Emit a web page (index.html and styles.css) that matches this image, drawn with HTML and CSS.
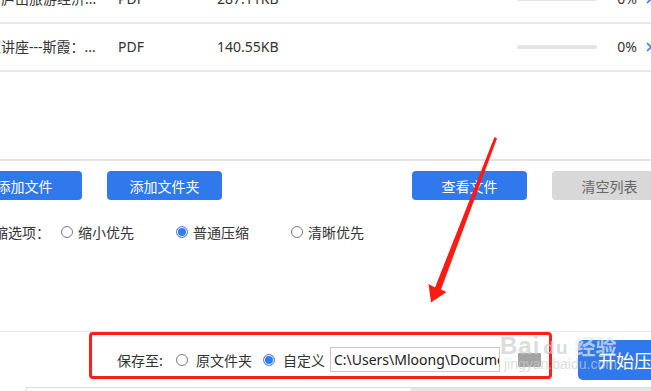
FILE: index.html
```html
<!DOCTYPE html>
<html lang="zh-CN">
<head>
    <meta charset="UTF-8">
    <meta name="viewport" content="width=device-width, initial-scale=1.0">
    <title>PDF压缩</title>
    <link rel="stylesheet" href="styles.css">
</head>
<body>

<div class="app">
    <div class="list">
        <div class="row">
            <div class="c-name">江西庐山旅游经济...</div>
            <div class="c-type">PDF</div>
            <div class="c-size">287.11KB</div>
            <div class="c-bar"><span></span></div>
            <div class="c-pct">0%</div>
            <svg class="chev" width="6" height="10" viewBox="0 0 6 10"><polyline points="1,1 5,5 1,9" fill="none" stroke="#3a7de8" stroke-width="1.6"/></svg>
        </div>
        <div class="row">
            <div class="c-name">名家讲座---斯霞：...</div>
            <div class="c-type">PDF</div>
            <div class="c-size">140.55KB</div>
            <div class="c-bar"><span></span></div>
            <div class="c-pct">0%</div>
            <svg class="chev" width="6" height="10" viewBox="0 0 6 10"><polyline points="1,1 5,5 1,9" fill="none" stroke="#3a7de8" stroke-width="1.6"/></svg>
        </div>
    </div>

    <div class="mid">
        <div class="toolbar">
            <button class="btn">添加文件</button>
            <button class="btn">添加文件夹</button>
            <button class="btn btn-view">查看文件</button>
            <button class="btn btn-gray">清空列表</button>
        </div>
        <div class="opts">
            <span class="opts-label">压缩选项：</span>
            <label class="opt"><span class="radio"></span>缩小优先</label>
            <label class="opt"><span class="radio on"></span>普通压缩</label>
            <label class="opt"><span class="radio"></span>清晰优先</label>
        </div>
    </div>

    <div class="savebar">
        <span class="save-label">保存至:</span>
        <label class="sopt sopt-first"><span class="radio"></span>原文件夹</label>
        <label class="sopt"><span class="radio on"></span>自定义</label>
        <div class="path">C:\Users\Mloong\Documents\PDF</div>
        <span class="folder"></span>
        <button class="btn btn-start">开始压缩</button>
    </div>

    <div class="foot"><span class="foot-right"></span></div>
</div>

<!-- annotation overlay -->
<div class="mark-box"></div>
<svg class="arrow" width="651" height="391" viewBox="0 0 651 391">
    <polygon points="494.5,137 497,138.5 441,289.5 446.5,292 431,302.5 428.5,284 435,287.5" fill="#ff1a14"/>
</svg>

<div class="watermark">
    <span class="wm-bai">Bai<span class="wm-du">du</span></span><span class="wm-jy">经验</span>
    <span class="wm-url">jingyan.baidu.com</span>
</div>

</body>
</html>
```

FILE: styles.css
```css
body {
    margin: 0;
    width: 651px;
    height: 391px;
    overflow: hidden;
    position: relative;
    background: #fff;
    color: #333;
    font-family: "Noto Sans", "Noto Sans CJK SC", sans-serif;
    font-size: 14px;
}
.app {
    width: 740px;
    margin-left: -34px;
}
.list {
    margin-top: -24px;
    height: 183px;
    border-bottom: 2px solid #e3e3e3;
}
.row {
    display: flex;
    align-items: center;
    height: 46px;
    border-bottom: 2px solid #e9e9e9;
    padding-left: 7px;
    line-height: 20px;
    white-space: nowrap;
}
.c-name {
    width: 145px;
    overflow: hidden;
}
.c-type {
    width: 99px;
}
.c-size {
    width: 300px;
}
.c-bar {
    width: 80px;
    height: 4px;
    border-radius: 2px;
    background: #e4e4e4;
}
.c-pct {
    width: 40px;
    text-align: right;
}
.chev {
    margin-left: 9px;
}
.mid {
    height: 170px;
    border-bottom: 1px solid #e6e6e6;
}
.toolbar {
    display: flex;
    padding-top: 10px;
    padding-left: 1px;
    gap: 25px;
}
.btn {
    width: 115px;
    height: 29px;
    border: none;
    border-radius: 4px;
    background: #3079ed;
    color: #fff;
    font-family: "Noto Sans CJK SC", sans-serif;
    font-size: 14px;
    padding: 0;
}
.btn-view {
    margin-left: 165px;
}
.btn-gray {
    background: #d8d8d8;
    color: #666;
}
.opts {
    display: flex;
    align-items: center;
    height: 20px;
    margin-top: 22px;
    padding-left: 14px;
    font-family: "Noto Sans CJK SC", sans-serif;
}
.opts-label {
    width: 81px;
}
.opt {
    display: flex;
    align-items: center;
    width: 115px;
}
.radio {
    width: 12px;
    height: 12px;
    box-sizing: border-box;
    border: 1px solid #7a7a7a;
    border-radius: 50%;
    background: #fff;
    margin-right: 5px;
    flex: none;
}
.radio.on {
    border-color: #6d8ec4;
    background: #2f7cf6;
    box-shadow: inset 0 0 0 1px #fff;
}
.savebar {
    display: flex;
    align-items: center;
    height: 55px;
    padding-left: 151px;
    font-family: "Noto Sans CJK SC", sans-serif;
}
.save-label {
    margin-right: 13px;
}
.sopt {
    display: flex;
    align-items: center;
    margin-right: 11px;
}
.sopt .radio {
    margin-right: 8px;
}
.sopt-first + .sopt {
    margin-right: 5px;
}
.path {
    width: 170px;
    height: 25px;
    box-sizing: border-box;
    border: 1px solid #c8c8c8;
    padding-left: 3px;
    line-height: 23px;
    white-space: nowrap;
    overflow: hidden;
    font-family: "Noto Sans", sans-serif;
    color: #222;
}
.folder {
    width: 23px;
    height: 14px;
    margin-left: 18px;
    background: #a3a3a3;
    border-radius: 1px;
}
.btn-start {
    width: 120px;
    height: 40px;
    margin-left: 37px;
    border-radius: 5px;
    font-size: 18px;
    text-align: left;
    padding-left: 20px;
}
.foot {
    position: relative;
    height: 4px;
    border-top: 1px solid #dcdcdc;
    border-left: 1px solid #dcdcdc;
    margin-left: 60px;
}
.foot-right {
    display: block;
    margin-left: 384px;
    height: 4px;
    background: #e6e6e6;
}
.mark-box {
    position: absolute;
    left: 89px;
    top: 332px;
    width: 463px;
    height: 47px;
    box-sizing: border-box;
    border: 3px solid #ff1f1a;
    border-radius: 4px;
}
.arrow {
    position: absolute;
    left: 0;
    top: 0;
}
.watermark {
    position: absolute;
    left: 500px;
    top: 330px;
    width: 140px;
    height: 52px;
    color: rgba(205, 205, 205, 0.7);
    font-family: "Liberation Sans", sans-serif;
    font-weight: bold;
}
.wm-bai {
    font-size: 24px;
    letter-spacing: 1px;
}
.wm-du {
    margin-left: 3px;
    font-size: 19px;
}
.wm-jy {
    margin-left: 6px;
    font-family: "Noto Sans CJK SC", sans-serif;
    font-size: 21px;
    color: rgba(235, 235, 235, 0.7);
}
.wm-url {
    display: block;
    margin-top: -4px;
    margin-left: 4px;
    font-size: 14px;
    font-weight: normal;
}
```
